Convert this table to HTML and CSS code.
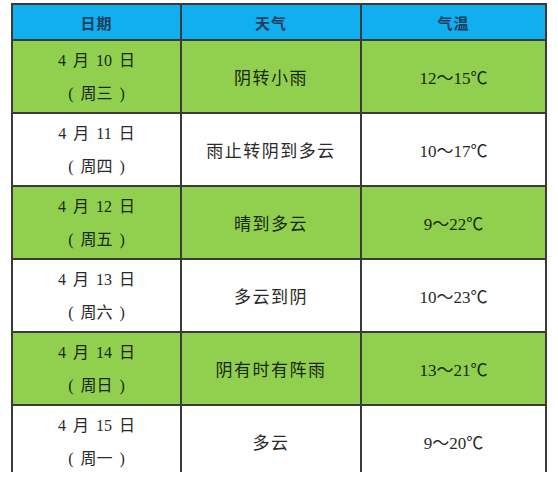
FILE: index.html
```html
<!DOCTYPE html>
<html lang="zh-CN">
<head>
<meta charset="utf-8">
<title>天气预报</title>
<link rel="stylesheet" href="styles.css">
</head>
<body>
<div class="frame">
  <table class="weather">
    <colgroup>
      <col class="c-date">
      <col class="c-wx">
      <col class="c-temp">
    </colgroup>
    <thead>
      <tr class="head">
        <th>日期</th>
        <th>天气</th>
        <th>气温</th>
      </tr>
    </thead>
    <tbody>
      <tr class="green">
        <td class="date"><div class="d1">4&nbsp;月&nbsp;10&nbsp;日</div><div class="d2">(&nbsp;周三&nbsp;)</div></td>
        <td class="wx">阴转小雨</td>
        <td class="temp">12～15℃</td>
      </tr>
      <tr class="white">
        <td class="date"><div class="d1">4&nbsp;月&nbsp;11&nbsp;日</div><div class="d2">(&nbsp;周四&nbsp;)</div></td>
        <td class="wx">雨止转阴到多云</td>
        <td class="temp">10～17℃</td>
      </tr>
      <tr class="green">
        <td class="date"><div class="d1">4&nbsp;月&nbsp;12&nbsp;日</div><div class="d2">(&nbsp;周五&nbsp;)</div></td>
        <td class="wx">晴到多云</td>
        <td class="temp">9～22℃</td>
      </tr>
      <tr class="white">
        <td class="date"><div class="d1">4&nbsp;月&nbsp;13&nbsp;日</div><div class="d2">(&nbsp;周六&nbsp;)</div></td>
        <td class="wx">多云到阴</td>
        <td class="temp">10～23℃</td>
      </tr>
      <tr class="green">
        <td class="date"><div class="d1">4&nbsp;月&nbsp;14&nbsp;日</div><div class="d2">(&nbsp;周日&nbsp;)</div></td>
        <td class="wx">阴有时有阵雨</td>
        <td class="temp">13～21℃</td>
      </tr>
      <tr class="white">
        <td class="date"><div class="d1">4&nbsp;月&nbsp;15&nbsp;日</div><div class="d2">(&nbsp;周一&nbsp;)</div></td>
        <td class="wx">多云</td>
        <td class="temp">9～20℃</td>
      </tr>
    </tbody>
  </table>
</div>
</body>
</html>
```

FILE: styles.css
```css
html, body {
  margin: 0;
  padding: 0;
  background: #ffffff;
}

body {
  width: 558px;
  height: 480px;
  overflow: hidden;
}

.frame {
  margin: 3px 0 0 11px;
  width: 536px;
  height: 469px;
  overflow: hidden;
}

.weather {
  border-collapse: collapse;
  table-layout: fixed;
  width: 534px;
  font-family: "Liberation Serif", "Noto Sans CJK SC", serif;
  color: #222;
  text-align: center;
}

.c-date { width: 169px; }
.c-wx { width: 180px; }
.c-temp { width: 185px; }

.weather th,
.weather td {
  border: 2px solid #3a3a3a;
  padding: 0;
  vertical-align: middle;
}

.weather td + td,
.weather th + th {
  border-left: 1px solid #4a4a4a;
}

.head th {
  height: 34px;
  background: #12aff0;
  font-family: "Noto Sans CJK SC", sans-serif;
  font-weight: 700;
  font-size: 15px;
  color: #1d3d5c;
  letter-spacing: 1px;
}

.weather tbody td {
  height: 71px;
}

.green td {
  background: #91d04e;
  color: #1a2610;
}

.white td {
  background: #ffffff;
  color: #2a2a2a;
}

.date .d1,
.date .d2 {
  line-height: 33px;
  font-size: 16px;
}

.date .d1 {
  font-family: "Liberation Serif", "Noto Sans CJK SC", serif;
  word-spacing: 3px;
}

.date .d2 {
  font-family: "Liberation Serif", "Noto Sans CJK SC", serif;
  font-size: 16px;
  word-spacing: 3px;
}

.wx {
  font-family: "Noto Sans CJK SC", sans-serif;
  font-size: 17px;
  letter-spacing: 1.5px;
}

.temp {
  font-family: "Liberation Serif", "Noto Sans CJK SC", serif;
  font-size: 17px;
}
```
